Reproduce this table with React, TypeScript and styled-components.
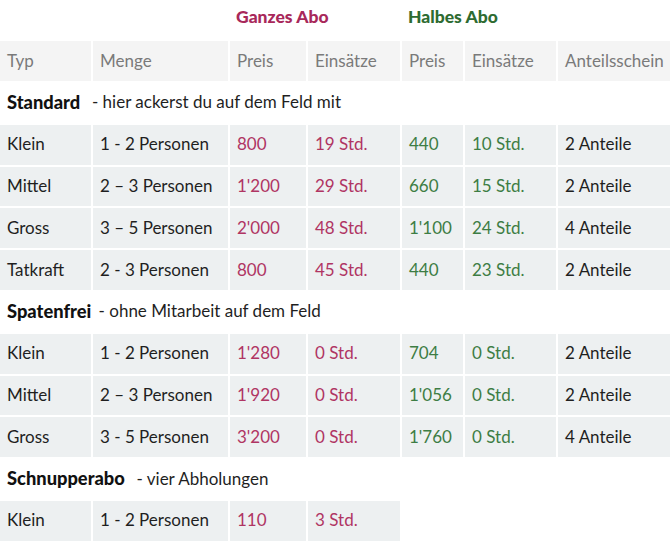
import React from 'react';
import styled, { createGlobalStyle, css } from 'styled-components';

const colors = {
    ganz: '#a8285a',
    ganzLight: '#b03563',
    halb: '#2e6b31',
    halbLight: '#3d7d44',
    head: '#f4f4f4',
    row: '#edf0f1',
    text: '#1f1f1f',
    muted: '#7a7a7a',
};

const GlobalStyle = createGlobalStyle`
    *, *::before, *::after {
        box-sizing: border-box;
    }

    body {
        margin: 0;
        background: #ffffff;
        font-family: Lato, "Open Sans", sans-serif;
    }
`;

type Tone = 'ganz' | 'halb' | 'plain';

const Table = styled.div`
    display: grid;
    grid-template-columns: 91px 135px 76px 92px 61px 91px 1fr;
    column-gap: 2px;
    row-gap: 2px;
    width: 670px;
`;

const Title = styled.div<{ $tone: Tone }>`
    grid-column: span 2;
    height: 39px;
    padding: 6px 6px 0;
    font-size: 17.5px;
    font-weight: 900;
    color: ${props => props.$tone === 'halb' ? colors.halb : colors.ganz};
`;

const Spacer = styled.div<{ $span: number }>`
    grid-column: span ${props => props.$span};
`;

const HeadCell = styled.div`
    height: 40px;
    display: flex;
    align-items: center;
    padding: 0 0 2px 7px;
    background: ${colors.head};
    color: ${colors.muted};
    font-size: 17px;
`;

const Section = styled.div`
    grid-column: 1 / -1;
    height: 39.8px;
    display: flex;
    align-items: center;
    padding: 0 0 2px 7px;
    font-size: 17px;
    color: ${colors.text};

    b {
        font-weight: 900;
        font-size: 18.3px;
        color: #111;
        margin-right: 3px;
    }
`;

const Cell = styled.div<{ $tone?: Tone }>`
    height: 39.8px;
    display: flex;
    align-items: center;
    padding: 0 0 2px 7px;
    background: ${colors.row};
    font-size: 17px;
    color: ${colors.text};

    ${props => props.$tone === 'ganz' && css`color: ${colors.ganzLight};`}
    ${props => props.$tone === 'halb' && css`color: ${colors.halbLight};`}
`;

type Row = {
    typ: string;
    menge: string;
    ganz: [string, string];
    halb?: [string, string];
    anteile?: string;
};

type Group = { name: string; note: string; rows: Row[] };

const groups: Group[] = [
    {
        name: 'Standard',
        note: ' - hier ackerst du auf dem Feld mit',
        rows: [
            { typ: 'Klein', menge: '1 - 2 Personen', ganz: ['800', '19 Std.'], halb: ['440', '10 Std.'], anteile: '2 Anteile' },
            { typ: 'Mittel', menge: '2 – 3 Personen', ganz: ['1\'200', '29 Std.'], halb: ['660', '15 Std.'], anteile: '2 Anteile' },
            { typ: 'Gross', menge: '3 – 5 Personen', ganz: ['2\'000', '48 Std.'], halb: ['1\'100', '24 Std.'], anteile: '4 Anteile' },
            { typ: 'Tatkraft', menge: '2 - 3 Personen', ganz: ['800', '45 Std.'], halb: ['440', '23 Std.'], anteile: '2 Anteile' },
        ],
    },
    {
        name: 'Spatenfrei',
        note: '- ohne Mitarbeit auf dem Feld',
        rows: [
            { typ: 'Klein', menge: '1 - 2 Personen', ganz: ['1\'280', '0 Std.'], halb: ['704', '0 Std.'], anteile: '2 Anteile' },
            { typ: 'Mittel', menge: '2 – 3 Personen', ganz: ['1\'920', '0 Std.'], halb: ['1\'056', '0 Std.'], anteile: '2 Anteile' },
            { typ: 'Gross', menge: '3 - 5 Personen', ganz: ['3\'200', '0 Std.'], halb: ['1\'760', '0 Std.'], anteile: '4 Anteile' },
        ],
    },
    {
        name: 'Schnupperabo',
        note: ' - vier Abholungen',
        rows: [
            { typ: 'Klein', menge: '1 - 2 Personen', ganz: ['110', '3 Std.'] },
        ],
    },
];

const headers = ['Typ', 'Menge', 'Preis', 'Einsätze', 'Preis', 'Einsätze', 'Anteilsschein'];

export default function App() {
    return (
        <>
            <GlobalStyle />
            <Table>
                <Spacer $span={2} />
                <Title $tone="ganz">Ganzes Abo</Title>
                <Title $tone="halb">Halbes Abo</Title>
                <Spacer $span={1} />

                {headers.map((h, i) => <HeadCell key={i}>{h}</HeadCell>)}

                {groups.map(group => (
                    <React.Fragment key={group.name}>
                        <Section>
                            <b>{group.name}</b>
                            <span>&nbsp;{group.note}</span>
                        </Section>
                        {group.rows.map((row, i) => (
                            <React.Fragment key={i}>
                                <Cell>{row.typ}</Cell>
                                <Cell>{row.menge}</Cell>
                                <Cell $tone="ganz">{row.ganz[0]}</Cell>
                                <Cell $tone="ganz">{row.ganz[1]}</Cell>
                                {row.halb ? (
                                    <>
                                        <Cell $tone="halb">{row.halb[0]}</Cell>
                                        <Cell $tone="halb">{row.halb[1]}</Cell>
                                        <Cell>{row.anteile}</Cell>
                                    </>
                                ) : (
                                    <Spacer $span={3} />
                                )}
                            </React.Fragment>
                        ))}
                    </React.Fragment>
                ))}
            </Table>
        </>
    );
}
